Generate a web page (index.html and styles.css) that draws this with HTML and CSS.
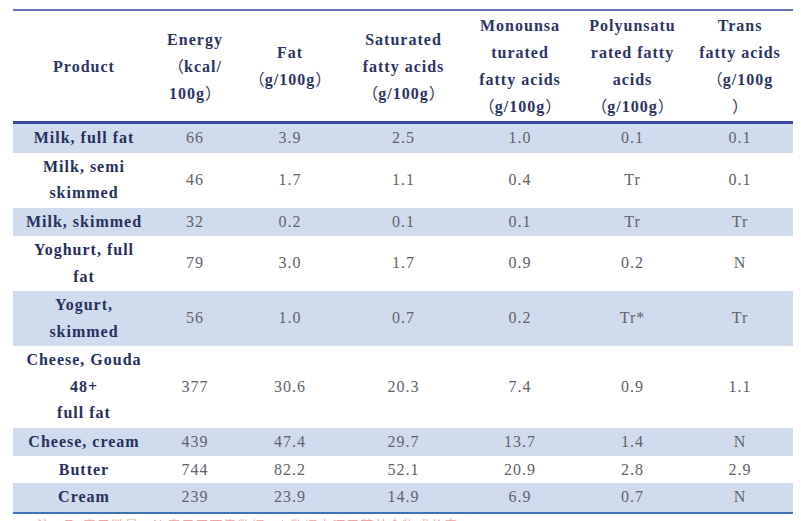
FILE: index.html
```html
<!DOCTYPE html>
<html lang="en">
<head>
<meta charset="utf-8">
<title>Fatty acid composition of dairy products</title>
<link rel="stylesheet" href="styles.css">
</head>
<body>
<div class="page">
  <table class="nutri">
    <colgroup>
      <col class="c-prod">
      <col class="c-energy">
      <col class="c-fat">
      <col class="c-sat">
      <col class="c-mono">
      <col class="c-poly">
      <col class="c-trans">
    </colgroup>
    <thead>
      <tr>
        <th>Product</th>
        <th>Energy<br><span class="fw">（</span>kcal/<br>100g<span class="fw">）</span></th>
        <th>Fat<br><span class="fw">（</span>g/100g<span class="fw">）</span></th>
        <th>Saturated<br>fatty acids<br><span class="fw">（</span>g/100g<span class="fw">）</span></th>
        <th>Monounsa<br>turated<br>fatty acids<br><span class="fw">（</span>g/100g<span class="fw">）</span></th>
        <th>Polyunsatu<br>rated fatty<br>acids<br><span class="fw">（</span>g/100g<span class="fw">）</span></th>
        <th>Trans<br>fatty acids<br><span class="fw">（</span>g/100g<br><span class="fw">）</span></th>
      </tr>
    </thead>
    <tbody>
      <tr class="shade"><td class="prod">Milk, full fat</td><td>66</td><td>3.9</td><td>2.5</td><td>1.0</td><td>0.1</td><td>0.1</td></tr>
      <tr><td class="prod">Milk, semi<br>skimmed</td><td>46</td><td>1.7</td><td>1.1</td><td>0.4</td><td>Tr</td><td>0.1</td></tr>
      <tr class="shade"><td class="prod">Milk, skimmed</td><td>32</td><td>0.2</td><td>0.1</td><td>0.1</td><td>Tr</td><td>Tr</td></tr>
      <tr><td class="prod">Yoghurt, full<br>fat</td><td>79</td><td>3.0</td><td>1.7</td><td>0.9</td><td>0.2</td><td>N</td></tr>
      <tr class="shade tall"><td class="prod">Yogurt,<br>skimmed</td><td>56</td><td>1.0</td><td>0.7</td><td>0.2</td><td>Tr*</td><td>Tr</td></tr>
      <tr><td class="prod">Cheese, Gouda<br>48+<br>full fat</td><td>377</td><td>30.6</td><td>20.3</td><td>7.4</td><td>0.9</td><td>1.1</td></tr>
      <tr class="shade"><td class="prod">Cheese, cream</td><td>439</td><td>47.4</td><td>29.7</td><td>13.7</td><td>1.4</td><td>N</td></tr>
      <tr class="short"><td class="prod">Butter</td><td>744</td><td>82.2</td><td>52.1</td><td>20.9</td><td>2.8</td><td>2.9</td></tr>
      <tr class="shade last"><td class="prod">Cream</td><td>239</td><td>23.9</td><td>14.9</td><td>6.9</td><td>0.7</td><td>N</td></tr>
    </tbody>
  </table>
  <div class="note">注：Tr 表示微量；N 表示无可靠数据；* 数据来源于荷兰食物成分表</div>
</div>
</body>
</html>
```

FILE: styles.css
```css
html, body {
  margin: 0;
  padding: 0;
  background: #ffffff;
}

.page {
  padding: 9px 8px 0 13px;
  font-family: "Liberation Serif", "Noto Sans CJK SC", serif;
}

.nutri {
  width: 780px;
  border-collapse: collapse;
  table-layout: fixed;
  font-size: 16px;
  letter-spacing: 1px;
}

.c-prod { width: 142px; }
.c-energy { width: 80px; }
.c-fat { width: 110px; }
.c-sat { width: 117px; }
.c-mono { width: 116px; }
.c-poly { width: 109px; }
.c-trans { width: 106px; }

.nutri thead tr {
  border-top: 2px solid #6a74b6;
  border-bottom: 3px solid #3c4a9e;
}

.nutri th {
  font-weight: bold;
  color: #2b3463;
  line-height: 27px;
  padding: 1px 0 1px;
  text-align: center;
  vertical-align: middle;
}

.fw {
  font-family: "Noto Sans CJK SC", sans-serif;
  font-weight: normal;
  letter-spacing: 0;
  line-height: 1;
}

.nutri td {
  color: #616168;
  line-height: 26.5px;
  padding: 1px 0;
  text-align: center;
  vertical-align: middle;
}

.nutri td.prod {
  font-weight: bold;
  color: #26305c;
}

.nutri tr.shade td {
  background: #d1dbee;
}

.nutri tr.short td {
  line-height: 25px;
}

.nutri tr.last {
  border-bottom: 2px solid #4173b4;
}

.note {
  margin-top: 2px;
  padding-left: 24px;
  font-family: "Noto Sans CJK SC", sans-serif;
  font-size: 13px;
  line-height: 18px;
  color: #eaa6a6;
  letter-spacing: 1px;
}
```
